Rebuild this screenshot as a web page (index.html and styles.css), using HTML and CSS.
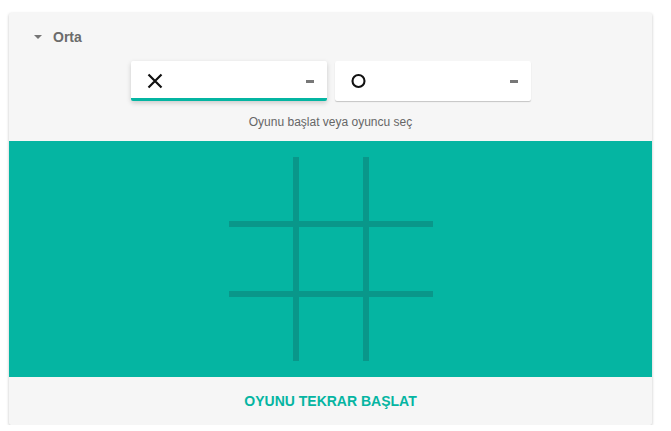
FILE: index.html
```html
<!DOCTYPE html>
<html lang="tr">
<head>
<meta charset="utf-8">
<link rel="stylesheet" href="styles.css">
</head>
<body>
<div class="card">
  <div class="header">
    <svg class="caret" width="10" height="5" viewBox="0 0 10 5"><path d="M1 0 L9 0 L5 4 Z" fill="#757575"/></svg>
    <span class="mode">Orta</span>
  </div>
  <div class="players">
    <div class="player active">
      <svg class="mark" width="16" height="16" viewBox="0 0 16 16"><path d="M1.5 1.5 L14.5 14.5 M14.5 1.5 L1.5 14.5" stroke="#111" stroke-width="2.2" fill="none"/></svg>
      <span class="score"></span>
    </div>
    <div class="player">
      <svg class="mark" width="16" height="16" viewBox="0 0 16 16"><circle cx="7.5" cy="8" r="6" stroke="#111" stroke-width="2.1" fill="none"/></svg>
      <span class="score"></span>
    </div>
  </div>
  <div class="hint">Oyunu başlat veya oyuncu seç</div>
  <div class="board">
    <div class="grid">
      <div class="cell"></div><div class="cell"></div><div class="cell"></div>
      <div class="cell"></div><div class="cell"></div><div class="cell"></div>
      <div class="cell"></div><div class="cell"></div><div class="cell"></div>
    </div>
  </div>
  <div class="footer">OYUNU TEKRAR BAŞLAT</div>
</div>
</body>
</html>
```
FILE: styles.css
```css
html, body {
  margin: 0;
  padding: 0;
  background: #ffffff;
  font-family: "Liberation Sans", Arial, sans-serif;
}
.card {
  margin: 13px 19px 0 9px;
  width: 643px;
  background: #f6f6f6;
  box-shadow: 0 1px 3px rgba(0,0,0,0.25);
  border-radius: 2px;
}
.header {
  display: flex;
  align-items: center;
  padding: 14px 0 0 24px;
  height: 20px;
}
.caret {
  display: block;
  margin-right: 10px;
}
.mode {
  font-size: 14px;
  font-weight: bold;
  color: #6b6b6b;
  line-height: 20px;
}
.players {
  display: flex;
  justify-content: center;
  gap: 8px;
  margin-top: 14px;
  padding-left: 1px;
}
.player {
  width: 196px;
  height: 40px;
  box-sizing: border-box;
  background: #ffffff;
  border-radius: 2px;
  display: flex;
  align-items: center;
  justify-content: space-between;
  padding: 0 13px 0 16px;
  box-shadow: 0 1px 1px rgba(0,0,0,0.2);
}
.player.active {
  border-bottom: 3px solid #04b5a2;
  padding-top: 3px;
  box-shadow: 0 2px 5px rgba(0,0,0,0.18);
}
.mark {
  display: block;
}
.score {
  display: block;
  width: 8px;
  height: 3px;
  background: #777777;
}
.hint {
  margin-top: 13px;
  text-align: center;
  font-size: 12px;
  line-height: 16px;
  color: #666666;
}
.board {
  margin-top: 11px;
  height: 236px;
  background: #05b5a2;
  display: flex;
  justify-content: center;
  align-items: center;
}
.grid {
  display: grid;
  grid-template-columns: 64px 64px 64px;
  grid-template-rows: 64px 64px 64px;
  gap: 6px;
  background: #09978a;
  margin-left: 1px;
}
.cell {
  background: #05b5a2;
}
.footer {
  height: 48px;
  line-height: 48px;
  text-align: center;
  font-size: 14px;
  font-weight: bold;
  color: #05b5a2;
}
```
